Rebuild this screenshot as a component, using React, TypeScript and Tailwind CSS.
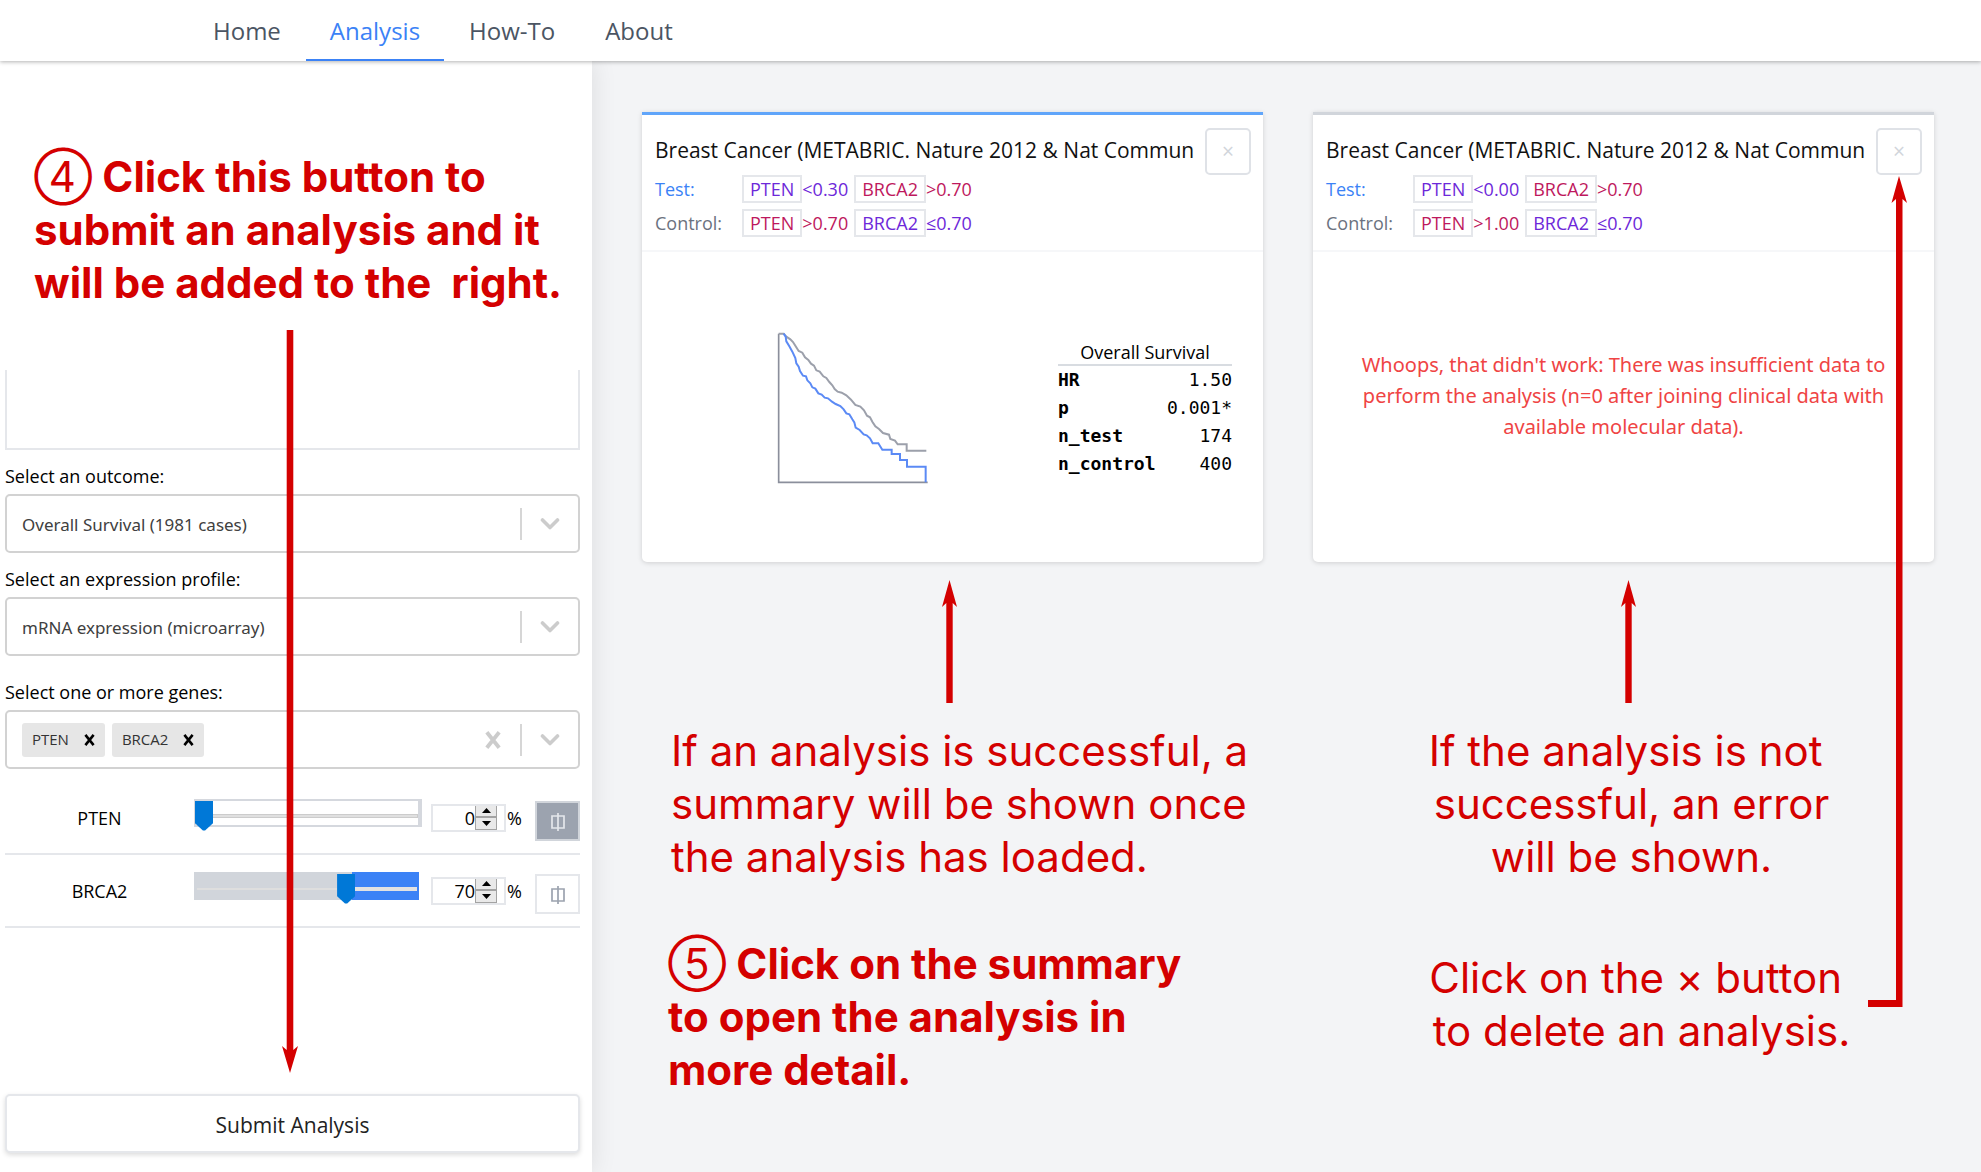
import { useState } from "react";

const UI = "font-['Open_Sans','Noto_Sans',sans-serif]";

type GeneProps = { name: string; initial: number; locked?: boolean };

function Chevron() {
  return (
    <svg className="h-5 w-5" viewBox="0 0 20 20" fill="none" stroke="#cccccc" strokeWidth="3.6" strokeLinecap="round" strokeLinejoin="round" aria-hidden="true">
      <path d="M2.5 6 L10 13.5 L17.5 6" />
    </svg>
  );
}

function Cross({ className }: { className: string }) {
  return (
    <svg className={className} viewBox="0 0 12 14" fill="none" stroke="currentColor" strokeWidth="3" aria-hidden="true">
      <path d="M1.2 1 L10.8 13 M10.8 1 L1.2 13" />
    </svg>
  );
}

function Dropdown({ id, label, option }: { id: string; label: string; option: string }) {
  return (
    <div className="flex flex-col">
      <label htmlFor={id} className="mb-1 text-[18px] leading-7 text-black">{label}</label>
      <div className="relative">
        <select id={id} className="h-[59px] w-full appearance-none rounded-[5px] border-2 border-[#d2d2d2] bg-white pl-[15px] pr-20 pt-0.5 font-['Noto_Sans',sans-serif] text-[17px] text-[#404040]">
          <option>{option}</option>
        </select>
        <div className="pointer-events-none absolute inset-y-0 right-5 flex items-center gap-[18px]">
          <span className="h-8 w-0.5 bg-[#d6d6d6]" />
          <Chevron />
        </div>
      </div>
    </div>
  );
}

function Chip({ name }: { name: string }) {
  return (
    <span className="flex h-[34px] items-center gap-[15px] rounded-[3px] bg-[#e6e6e6] px-[10px] text-[15px] text-[#333333]">
      {name}
      <button type="button" aria-label={`Remove ${name}`} className="text-black">
        <Cross className="h-3 w-[11px]" />
      </button>
    </span>
  );
}

function GeneRow({ name, initial, locked = false }: GeneProps) {
  const [value, setValue] = useState(initial);
  const [split, setSplit] = useState(locked);
  const clamp = (n: number) => Math.max(0, Math.min(100, n));
  return (
    <div className="flex h-[73px] items-center border-b-2 border-[#e5e7eb]">
      <label htmlFor={`range-${name}`} className="w-[189px] pt-0.5 text-center text-[18px] text-black">{name}</label>
      <div className="relative mb-[10px] h-7 min-w-0 flex-1">
        {split ? (
          <>
            <div className="absolute inset-0 border-2 border-r-4 border-[#d5d8de] bg-white" />
            <div className="absolute left-0.5 right-1 top-[15px] h-1 border border-[#cccccc] bg-[#e0e0e0]" />
          </>
        ) : (
          <div className="absolute inset-y-0 left-0 right-[3px] bg-[#d1d5db]">
            <div className="absolute inset-x-[3px] top-4 h-0.5 bg-[#dedede]" />
            <div className="absolute inset-y-0 right-0 bg-[#3b82f6]" style={{ left: `${value}%` }}>
              <div className="absolute left-0 right-0.5 top-[15px] h-1 bg-[#e2e2e2]" />
            </div>
          </div>
        )}
        <input
          id={`range-${name}`}
          type="range"
          min={0}
          max={100}
          value={value}
          onChange={(e) => setValue(Number(e.target.value))}
          className="absolute left-px top-0 h-[34px] w-[calc(100%-7px)] appearance-none bg-transparent [&::-webkit-slider-thumb]:h-[30px] [&::-webkit-slider-thumb]:w-[18px] [&::-webkit-slider-thumb]:appearance-none [&::-webkit-slider-thumb]:bg-[#0078d7] [&::-webkit-slider-thumb]:[clip-path:polygon(0_0,100%_0,100%_76%,56%_100%,44%_100%,0_76%)]"
        />
      </div>
      <div className="ml-[9px] flex h-7 w-[75px] border-2 border-[#e5e7eb] bg-white">
        <input
          type="number"
          aria-label={`${name} percent`}
          value={value}
          onChange={(e) => setValue(clamp(Number(e.target.value)))}
          className="w-[42px] appearance-none bg-transparent text-right text-[18px] leading-6 text-black [&::-webkit-inner-spin-button]:appearance-none"
        />
        <div className="flex w-[22px] flex-col gap-0.5 border-x border-b border-[#a3a3a3] bg-[#a3a3a3]">
          <button type="button" aria-label={`Increase ${name}`} onClick={() => setValue(clamp(value + 1))} className="flex flex-1 items-center justify-center bg-[#e9e9e9]">
            <svg className="h-[5px] w-[9px]" viewBox="0 0 9 5"><path d="M0 5 L4.5 0 L9 5 Z" fill="#000" /></svg>
          </button>
          <button type="button" aria-label={`Decrease ${name}`} onClick={() => setValue(clamp(value - 1))} className="flex flex-1 items-center justify-center bg-[#e9e9e9]">
            <svg className="h-[5px] w-[9px]" viewBox="0 0 9 5"><path d="M0 0 L4.5 5 L9 0 Z" fill="#000" /></svg>
          </button>
        </div>
      </div>
      <span className="ml-px w-7 pt-0.5 text-[18px] text-black">%</span>
      <button
        type="button"
        aria-label={`Split ${name}`}
        aria-pressed={split}
        onClick={() => setSplit(!split)}
        className={split ? "mt-1.5 flex h-10 w-[45px] items-center justify-center border-2 border-[#d1d5db] bg-[#9ca3af] text-[#e4e7ec]" : "mt-1.5 flex h-10 w-[45px] items-center justify-center border-2 border-[#e5e7eb] bg-white text-[#9ca3af]"}
      >
        <svg className="mt-0.5 h-[18px] w-4" viewBox="0 0 16 18" fill="none" stroke="currentColor" strokeWidth="1.7" aria-hidden="true">
          <path d="M2 3 H14 V15 H2 Z M8 0 V18" />
        </svg>
      </button>
    </div>
  );
}

function Gene({ name, rule, high }: { name: string; rule: string; high?: boolean }) {
  return (
    <span className={high ? "flex items-center text-[#be185d]" : "flex items-center text-[#6d28d9]"}>
      <span className="flex h-7 items-center border-2 border-[#e5e7eb] px-1.5 text-[18px]">{name}</span>
      <span className="text-[18px]">{rule}</span>
    </span>
  );
}

function CardHeader({ active, test, control }: { active?: boolean; test: string[]; control: string[] }) {
  return (
    <div className={active ? "relative h-[140px] border-b-2 border-t-[3px] border-b-[#f6f7f9] border-t-[#60a5fa] pl-[13px]" : "relative h-[140px] border-b-2 border-t-[3px] border-b-[#f6f7f9] border-t-[#d1d5db] pl-[13px]"}>
      <h2 className="mr-[60px] mt-[21px] whitespace-nowrap text-[21px] leading-7 text-[#111111]">
        Breast Cancer (METABRIC. Nature 2012 &amp; Nat Commun
      </h2>
      <button type="button" aria-label="Delete analysis" className="absolute right-3 top-[13px] flex h-[47px] w-[46px] items-center justify-center rounded-[5px] border-2 border-[#dfe2e7] bg-white text-[21px] text-[#d1d5db]">
        ×
      </button>
      <div className="mt-[11px] flex flex-col gap-1.5 text-[18px]">
        <div className="flex h-7 items-center">
          <span className="w-[87px] text-[#3b82f6]">Test:</span>
          <div className="flex gap-1.5">
            <Gene name="PTEN" rule={test[0]} />
            <Gene name="BRCA2" rule={test[1]} high />
          </div>
        </div>
        <div className="flex h-7 items-center">
          <span className="w-[87px] text-[#6b7280]">Control:</span>
          <div className="flex gap-1.5">
            <Gene name="PTEN" rule={control[0]} high />
            <Gene name="BRCA2" rule={control[1]} />
          </div>
        </div>
      </div>
    </div>
  );
}

function SurvivalPlot() {
  return (
    <svg className="h-[152px] w-[152px]" viewBox="112 65 456 456" fill="none" strokeWidth="5" role="img" aria-label="Survival curves">
      <path stroke="#8b8f9c" d="M117 70 V516 H564" />
      <path stroke="#9ca0ab" strokeWidth="6" d="M117 70 H132 L140 79 L152 87 L160 95 L168 108 L177 122 L188 127 L196 141 L206 149 L214 160 L223 166 L230 180 L240 184 L251 198 L260 203 L269 215 L278 225 L285 236 L294 244 L306 247 L320 255 L334 268 L347 284 L362 289 L373 300 L382 316 L391 321 L398 334 L407 348 L418 356 L430 368 L448 373 L452 386 L466 391 L474 402 H501 V421 H560" />
      <path stroke="#5b8af5" strokeWidth="6" d="M132 70 L138 79 L140 93 L149 108 L158 124 L167 143 L170 159 L177 169 L181 182 L190 196 L199 198 L203 210 L212 219 L218 231 L227 235 L236 249 L246 253 L255 262 L265 264 L277 274 L288 281 L302 287 L312 297 L320 309 L329 312 L338 327 L344 336 L348 352 L360 359 L372 372 L381 375 L391 384 L399 399 H416 L421 407 L428 418 H456 V431 H481 V449 H502 V469 H558 V516" />
    </svg>
  );
}

const STATS = [
  ["HR", "1.50"],
  ["p", "0.001*"],
  ["n_test", "174"],
  ["n_control", "400"],
];

function UpArrow() {
  return (
    <svg className="h-[123px] w-[15px]" viewBox="0 0 15 123" fill="#d40000" aria-hidden="true">
      <path d="M7.5 0 L15 27 L10.7 23 V123 H4.3 V23 L0 27 Z" />
    </svg>
  );
}

export default function App() {
  return (
    <div className={`flex min-h-screen flex-col bg-[#f3f4f6] ${UI}`}>
      <header className="relative z-10 h-[61px] bg-white shadow-[0_1px_4px_rgba(0,0,0,0.3)]">
        <nav className="ml-[188px] flex h-full text-[24px] text-[#4b5563]">
          <a href="#home" className="flex items-center px-[25px]">Home</a>
          <a href="#analysis" className="flex items-center border-b-2 border-[#3b82f6] px-6 pt-0.5 text-[#3b82f6]">Analysis</a>
          <a href="#how-to" className="flex items-center px-[25px]">How-To</a>
          <a href="#about" className="flex items-center px-[25px]">About</a>
        </nav>
      </header>

      <div className="flex flex-1">
        <aside className="relative flex w-[592px] shrink-0 flex-col bg-white pl-[5px] pr-3 shadow-[0_0_24px_rgba(0,0,0,0.1)]">
          <h1 className="ml-[29px] mt-[89px] whitespace-nowrap font-['Inter',sans-serif] text-[42px] font-bold leading-[53px] text-[#d40000]">
            <span className="font-normal">④</span> Click this button to
            <br />
            submit an analysis and it
            <br />
            will be added to the&nbsp; right.
          </h1>
          <div className="mb-3 mt-[61px] h-20 border-2 border-t-0 border-[#e5e7eb]" />

          <div className="flex flex-col gap-3">
            <Dropdown id="outcome" label="Select an outcome:" option="Overall Survival (1981 cases)" />
            <Dropdown id="profile" label="Select an expression profile:" option="mRNA expression (microarray)" />
          </div>

          <div className="mt-[22px]">
            <label htmlFor="genes" className="mb-1 block text-[18px] leading-7 text-black">Select one or more genes:</label>
            <div className="flex h-[59px] items-center gap-[7px] rounded-[5px] border-2 border-[#d2d2d2] pl-[15px] pr-[18px]">
              <Chip name="PTEN" />
              <Chip name="BRCA2" />
              <input id="genes" type="text" className="min-w-0 flex-1 bg-transparent text-[17px] outline-none" />
              <button type="button" aria-label="Clear genes" className="text-[#cccccc]">
                <Cross className="h-[18px] w-4" />
              </button>
              <span className="ml-3 h-8 w-0.5 bg-[#d6d6d6]" />
              <button type="button" aria-label="Open gene list" className="ml-[11px]">
                <Chevron />
              </button>
            </div>
          </div>

          <div className="mt-[13px]">
            <GeneRow name="PTEN" initial={0} locked />
            <GeneRow name="BRCA2" initial={70} />
          </div>

          <button type="button" className="mb-[19px] mt-auto h-[59px] rounded-[5px] border-2 border-[#e5e7eb] bg-white pt-1 text-[21px] text-[#222222] shadow-[0_2px_5px_rgba(0,0,0,0.14)]">
            Submit Analysis
          </button>

          <svg className="pointer-events-none absolute left-[282px] top-[269px] h-[743px] w-4" viewBox="0 0 16 743" fill="#d40000" aria-hidden="true">
            <path d="M4.7 0 H11.3 V720 L16 716 L8 743 L0 716 L4.7 720 Z" />
          </svg>
        </aside>

        <main className="grid flex-1 grid-cols-2 gap-[50px] pl-[50px] pr-[47px] pt-[51px]">
          <section className="flex flex-col">
            <article className="flex h-[450px] flex-col rounded-b-[5px] bg-white shadow-[0_1px_5px_rgba(0,0,0,0.15)]">
              <CardHeader active test={["<0.30", ">0.70"]} control={[">0.70", "≤0.70"]} />
              <div className="flex flex-1 items-start justify-between pl-[135px] pr-[31px] pt-20">
                <SurvivalPlot />
                <table className="mt-2 w-[174px] border-collapse font-['DejaVu_Sans_Mono',monospace] text-[18px] text-black">
                  <caption className={`border-b-2 border-[#d8dce1] text-[18px] leading-6 ${UI}`}>Overall Survival</caption>
                  <tbody>
                    {STATS.map(([name, value]) => (
                      <tr key={name} className="leading-7">
                        <th scope="row" className="text-left text-[18px] font-bold">{name}</th>
                        <td className="text-right">{value}</td>
                      </tr>
                    ))}
                  </tbody>
                </table>
              </div>
            </article>
            <div className="mt-[18px] flex justify-center pr-1.5">
              <UpArrow />
            </div>
            <p className="ml-[29px] mt-[21px] whitespace-nowrap font-['Inter',sans-serif] text-[42px] leading-[53px] text-[#d40000]">
              If an analysis is successful, a
              <br />
              summary will be shown once
              <br />
              the analysis has loaded.
            </p>
            <p className="ml-[26px] mt-[54px] whitespace-nowrap font-['Inter',sans-serif] text-[42px] font-bold leading-[53px] text-[#d40000]">
              <span className="font-normal">⑤</span> Click on the summary
              <br />
              to open the analysis in
              <br />
              more detail.
            </p>
          </section>

          <section className="relative flex flex-col">
            <article className="flex h-[450px] flex-col rounded-b-[5px] bg-white shadow-[0_1px_5px_rgba(0,0,0,0.15)]">
              <CardHeader test={["<0.00", ">0.70"]} control={[">1.00", "≤0.70"]} />
              <p className="mt-[97px] whitespace-nowrap text-center font-['Noto_Sans',sans-serif] text-[20px] leading-[31px] text-[#ef4444]">
                Whoops, that didn't work: There was insufficient data to
                <br />
                perform the analysis (n=0 after joining clinical data with
                <br />
                available molecular data).
              </p>
            </article>
            <div className="mt-[18px] flex justify-center pl-2.5">
              <UpArrow />
            </div>
            <div className="mt-[21px] whitespace-nowrap text-center font-['Inter',sans-serif] text-[42px] leading-[53px] text-[#d40000]">
              <p className="pl-4">
                If the analysis is not&nbsp;
                <br />
                successful, an error
                <br />
                will be shown.
              </p>
              <p className="mt-[68px] pl-9">
                Click on the × button&nbsp;
                <br />
                to delete an analysis.
              </p>
            </div>
            <svg className="pointer-events-none absolute right-[27px] top-16 h-[831px] w-[40px]" viewBox="0 0 40 831" fill="#d40000" aria-hidden="true">
              <path d="M32 0 L40 27 L35.5 23 V831 H1 V824 H29 V23 L24.5 27 Z" />
            </svg>
          </section>
        </main>
      </div>
    </div>
  );
}
